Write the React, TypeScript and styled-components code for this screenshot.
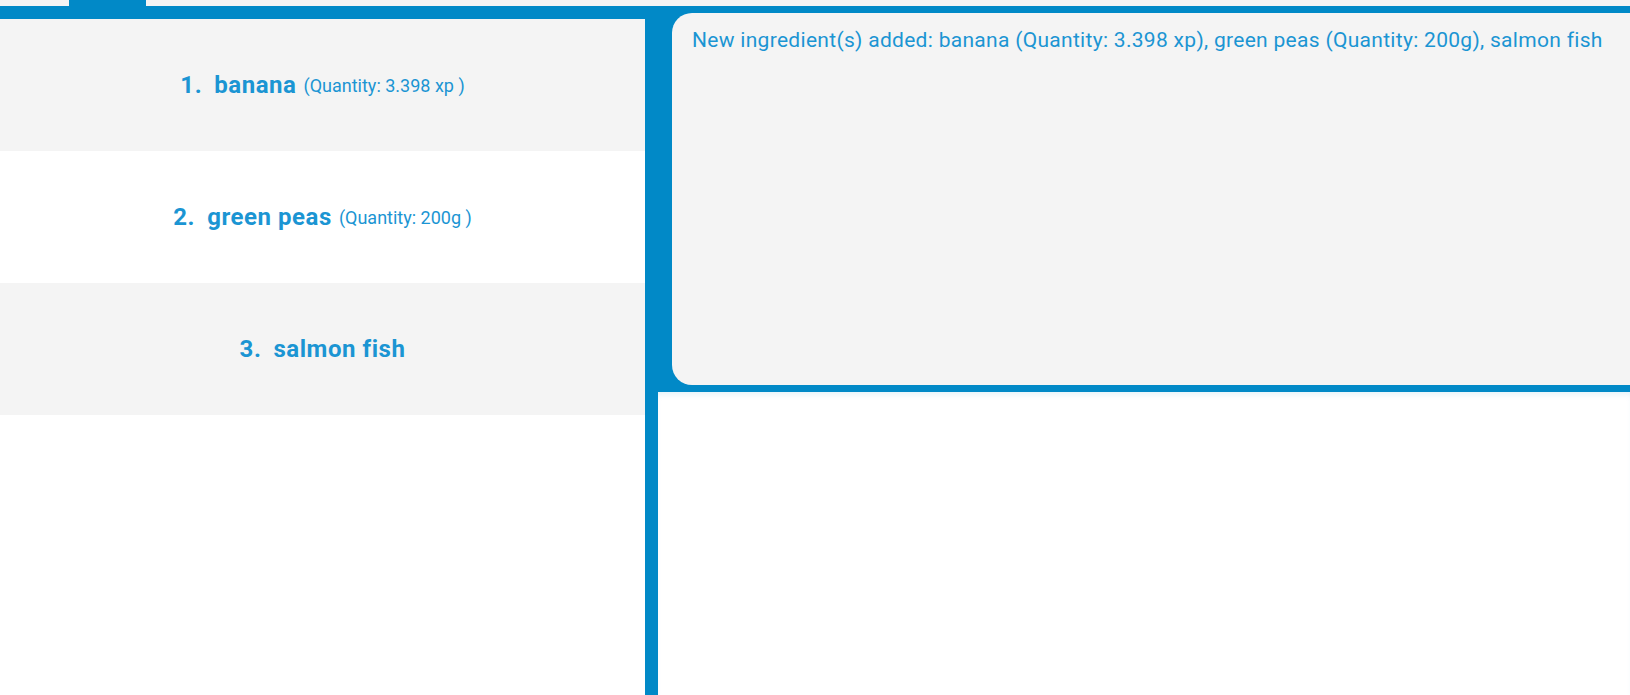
import React from "react";
import styled, { createGlobalStyle } from "styled-components";

const Global = createGlobalStyle`
  html, body { margin: 0; padding: 0; background: #ffffff; }
  body { font-family: Roboto, "Liberation Sans", Arial, sans-serif; overflow: hidden; }
`;

const BLUE = "#0189c7";
const TEXT = "#1b95d3";

const Page = styled.div`
  width: 1630px;
  height: 695px;
  display: flex;
  flex-direction: column;
`;

const TabStrip = styled.div`
  height: 6px;
  background: #f4f4f4;
  display: flex;
  padding-left: 69px;
`;

const Tab = styled.div`
  width: 77px;
  background: ${BLUE};
`;

const Main = styled.div`
  flex: 1;
  display: flex;
  background: ${BLUE};
  min-height: 0;
`;

const LeftColumn = styled.div`
  width: 645px;
  margin-top: 13px;
  background: #ffffff;
  display: flex;
  flex-direction: column;
`;

const Row = styled.div<{ $shaded: boolean }>`
  height: 132px;
  display: flex;
  align-items: center;
  justify-content: center;
  background: ${(p) => (p.$shaded ? "#f4f4f4" : "#ffffff")};
  color: ${TEXT};
`;

const Index = styled.span`
  font-weight: 700;
  font-size: 24px;
  letter-spacing: 0.6px;
  margin-right: 12px;
`;

const Name = styled.span`
  font-weight: 700;
  font-size: 24px;
  letter-spacing: 0.55px;
`;

const Qty = styled.span`
  font-size: 18px;
  margin-left: 7px;
`;

const RightColumn = styled.div`
  flex: 1;
  margin-left: 13px;
  display: flex;
  flex-direction: column;
`;

const CardWrap = styled.div`
  padding: 7px 0 7px 14px;
  background: ${BLUE};
`;

const Card = styled.div`
  height: 372px;
  box-sizing: border-box;
  background: #f4f4f4;
  border-radius: 20px 0 0 20px;
  padding: 15px 20px;
  color: ${TEXT};
  font-size: 21px;
  letter-spacing: 0.3px;
  line-height: 24px;
  white-space: nowrap;
`;

const Lower = styled.div`
  flex: 1;
  background: #ffffff;
  box-shadow: inset 0 5px 6px -3px rgba(1, 137, 199, 0.12);
`;

const items = [
  { name: "banana", qty: "(Quantity: 3.398 xp )" },
  { name: "green peas", qty: "(Quantity: 200g )" },
  { name: "salmon fish", qty: "" },
];

export default function App() {
  return (
    <Page>
      <Global />
      <TabStrip>
        <Tab />
      </TabStrip>
      <Main>
        <LeftColumn>
          {items.map((it, i) => (
            <Row key={it.name} $shaded={i % 2 === 0}>
              <Index>{i + 1}.</Index>
              <Name>{it.name}</Name>
              {it.qty && <Qty>{it.qty}</Qty>}
            </Row>
          ))}
        </LeftColumn>
        <RightColumn>
          <CardWrap>
            <Card>
              New ingredient(s) added: banana (Quantity: 3.398 xp), green peas (Quantity: 200g), salmon fish
            </Card>
          </CardWrap>
          <Lower />
        </RightColumn>
      </Main>
    </Page>
  );
}
